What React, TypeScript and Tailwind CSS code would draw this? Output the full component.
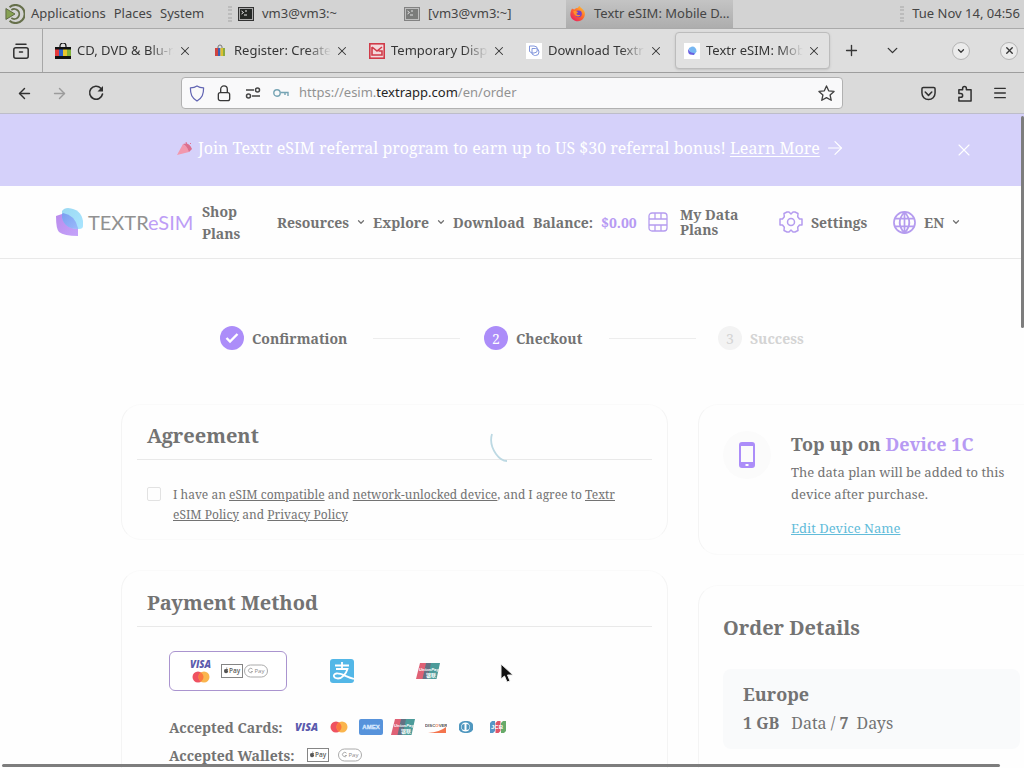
import type { ReactNode } from "react";
import { ArrowLeft, ArrowRight, ChevronDown, Menu, Plus, X } from "lucide-react";

const serif = "font-['Noto_Serif','DejaVu_Serif_Condensed','DejaVu_Serif',serif]";

function TerminalIcon({ faded = false }: { faded?: boolean }) {
  return (
    <svg viewBox="0 0 16 14" className={faded ? "h-3.5 w-4 shrink-0 opacity-50" : "h-3.5 w-4 shrink-0"} aria-hidden="true">
      <rect x="0.5" y="0.5" width="15" height="13" fill="#aaa" stroke="#333" />
      <rect x="2" y="2" width="12" height="10" fill="#252826" />
      <path d="M3.5 4l2 1.5-2 1.5M7 4h2M6 8h3" stroke="#eee" strokeWidth="1" fill="none" />
    </svg>
  );
}

function MateIcon() {
  return (
    <svg viewBox="0 0 22 22" className="h-5 w-5 shrink-0" fill="none" aria-hidden="true">
      <path d="M5 3.500a10 10 0 1 1 0 15" stroke="#66704b" strokeWidth="2.200" />
      <path d="M7 6.500a5.500 5.500 0 1 1 0 9" stroke="#66704b" strokeWidth="2" />
      <path d="M1 5l10 6-10 6z" fill="#86a153" stroke="#59633f" />
    </svg>
  );
}

function FirefoxIcon() {
  return (
    <svg viewBox="0 0 18 20" className="h-[17px] w-4 shrink-0" aria-hidden="true">
      <defs>
        <linearGradient id="fox" x1="1" y1="0" x2="0.2" y2="1">
          <stop offset="0" stopColor="#ffd43a" />
          <stop offset="0.5" stopColor="#ff6b29" />
          <stop offset="1" stopColor="#e91e63" />
        </linearGradient>
      </defs>
      <path d="M2 3c1 1 2 1 3 1 1-1 2-2 4-2 0 0 1-2 2-2 0 2 5 3 6 8 1 5-3 10-8 10S0 14 0 10c0-3 1-5 2-7z" fill="url(#fox)" />
      <circle cx="9.5" cy="9.2" r="4" fill="#7540c8" />
      <path d="M3.5 6c2-1 4 0 5.500 1.500L7 9c1 2 4 2 5 1-1 4-8 3-8.500-4z" fill="#ff8f2b" />
    </svg>
  );
}

function BagIcon({ large = false }: { large?: boolean }) {
  if (large) {
    return (
      <svg viewBox="0 0 16 16" className="h-4 w-4 shrink-0" aria-hidden="true">
        <path d="M5 4V3a3 3 0 0 1 6 0v1" fill="none" stroke="#111" strokeWidth="1.200" />
        <rect x="0" y="4" width="16" height="12" fill="#111" />
        <rect x="0" y="6.500" width="4" height="6.500" fill="#e43b3c" />
        <rect x="4" y="6.500" width="4" height="6.500" fill="#2d62c9" />
        <rect x="8" y="6.500" width="4" height="6.500" fill="#e7c52c" />
        <rect x="12" y="6.500" width="4" height="6.500" fill="#7fb13a" />
      </svg>
    );
  }
  return (
    <svg viewBox="0 0 16 16" className="h-4 w-4 shrink-0" aria-hidden="true">
      <path d="M6 5V4a2 2 0 0 1 4 0v1" fill="none" stroke="#777" />
      <rect x="3" y="5" width="3" height="8" fill="#d0443f" />
      <rect x="6" y="5" width="2.500" height="8" fill="#3a5fb5" />
      <rect x="8.500" y="5" width="2.500" height="8" fill="#dcc033" />
      <rect x="11" y="5" width="2" height="8" fill="#8cab3f" />
    </svg>
  );
}

function MailIcon() {
  return (
    <svg viewBox="0 0 16 16" className="h-4 w-4 shrink-0" fill="none" stroke="#d03a48" strokeWidth="1.600" aria-hidden="true">
      <rect x="0.800" y="0.800" width="14.400" height="14.400" fill="#f3d9dc" />
      <path d="M3 4l5 4 5-4M3 4v8h10V8H9.500" />
    </svg>
  );
}

function TextrIcon() {
  return (
    <svg viewBox="0 0 16 16" className="h-4 w-4 shrink-0 bg-white" fill="none" stroke="#8296dc" aria-hidden="true">
      <path d="M3.500 3H8a3.500 3.500 0 0 1 0 7H6L3.500 8.500zM6 5.500h3.500a3.500 3.500 0 0 1 0 7H8.500L6 11z" />
    </svg>
  );
}

function EsimIcon() {
  return (
    <svg viewBox="0 0 16 16" className="h-4 w-4 shrink-0 bg-white" aria-hidden="true">
      <path d="M5 5l3-1.500c3 0 4.500 2 4.500 5l-2 3-5-1z" fill="#77b7f2" />
      <path d="M4 5.500c1 3 3 4.500 6.500 4.500l-.5 2-4-.5C4.200 11 4 8.500 4 5.500z" fill="#6a5fe0" />
    </svg>
  );
}

function Tab({ icon, title, active = false }: { icon: ReactNode; title: string; active?: boolean }) {
  return (
    <div
      className={
        active
          ? "flex h-[37px] w-[155px] shrink-0 items-center rounded border border-[#bcbcbc] bg-[#e1e1e1] px-2 shadow-sm"
          : "flex h-[37px] w-[157px] shrink-0 items-center pr-3 pl-2"
      }
    >
      {icon}
      <span className="ml-1.5 min-w-0 flex-1 overflow-hidden mask-r-from-75% mask-r-to-100% whitespace-nowrap">{title}</span>
      <button aria-label={"Close " + title} className="ml-1 shrink-0">
        <X size={14} strokeWidth={1.8} />
      </button>
    </div>
  );
}

function SystemBar() {
  return (
    <header className="flex h-[29px] shrink-0 items-center border-b border-[#aaa] bg-[#d3d3d3] text-[13px] whitespace-nowrap text-[#454545]">
      <nav className="flex w-[228px] shrink-0 items-center pl-[5px]">
        <MateIcon />
        <button className="ml-1.5">Applications</button>
        <button className="ml-2">Places</button>
        <button className="ml-2">System</button>
      </nav>
      <span className="h-4 w-1 border-x-2 border-dotted border-[#bcbcbc]" />
      <button className="flex w-[172px] shrink-0 items-center gap-2 pl-1.5">
        <TerminalIcon />vm3@vm3:~
      </button>
      <button className="flex w-[162px] shrink-0 items-center gap-2">
        <TerminalIcon faded />[vm3@vm3:~]
      </button>
      <button className="flex h-full w-[167px] shrink-0 items-center gap-2 bg-linear-to-b from-[#c4c4c4] to-[#adadad] pl-1">
        <FirefoxIcon />Textr eSIM: Mobile D…
      </button>
      <span className="ml-auto h-4 w-1 border-x-2 border-dotted border-[#bcbcbc]" />
      <time className="pr-1 pl-2">Tue Nov 14, 04:56</time>
    </header>
  );
}

function TabBar() {
  return (
    <div className="flex h-11 shrink-0 items-center border-b border-[#9e9e9e] bg-[#dedede] text-[13px] text-[#363636]">
      <button aria-label="Firefox View" className="flex h-full w-[43px] shrink-0 items-center justify-center border-r border-[#a7a7a7] pr-px">
        <svg viewBox="0 0 16 16" className="h-4 w-4" fill="none" stroke="#303030" strokeWidth="1.500" strokeLinecap="round" aria-hidden="true">
          <rect x="0.800" y="4.800" width="14.400" height="10.400" rx="2" />
          <path d="M3 1.200h10M6.500 9h3" />
        </svg>
      </button>
      <div className="flex shrink-0 items-center pl-1">
        <Tab icon={<BagIcon large />} title="CD, DVD & Blu-ray" />
        <Tab icon={<BagIcon />} title="Register: Create a" />
        <Tab icon={<MailIcon />} title="Temporary Disposable" />
        <Tab icon={<TextrIcon />} title="Download Textr f" />
        <Tab active icon={<EsimIcon />} title="Textr eSIM: Mobile" />
      </div>
      <button aria-label="New tab" className="ml-[13px] shrink-0"><Plus size={17} strokeWidth={1.9} /></button>
      <button aria-label="List all tabs" className="ml-6 shrink-0"><ChevronDown size={17} strokeWidth={1.9} /></button>
      <button aria-label="Minimize" className="ml-auto flex h-[18px] w-[18px] items-center justify-center rounded-full border border-[#b4b4b4] bg-[#ebebeb]">
        <ChevronDown size={10} strokeWidth={3} />
      </button>
      <button aria-label="Close window" className="mr-1.5 ml-[30px] flex h-[18px] w-[18px] items-center justify-center rounded-full border border-[#b4b4b4] bg-[#ebebeb]">
        <X size={11} strokeWidth={3} />
      </button>
    </div>
  );
}

function AddressBar() {
  return (
    <div className="flex h-[41px] shrink-0 items-center border-b border-[#bdbdc9] bg-[#dadada] px-4 text-[#303030]">
      <button aria-label="Back"><ArrowLeft size={17} strokeWidth={2} /></button>
      <button aria-label="Forward" className="ml-[18px] text-[#9b9b9b]"><ArrowRight size={17} strokeWidth={2} /></button>
      <button aria-label="Reload" className="ml-5">
        <svg viewBox="0 0 16 16" className="h-4 w-4" fill="none" stroke="currentColor" strokeWidth="1.600" aria-hidden="true">
          <path d="M12.800 3.200A6.500 6.500 0 1 0 14.500 9" strokeLinecap="round" />
          <path d="M15 1v5.500H9.500z" fill="currentColor" stroke="none" />
        </svg>
      </button>
      <div className="ml-[77px] flex h-8 w-[662px] items-center rounded border border-[#b1b1b1] bg-[#f9f9fa] px-[7px]">
        <svg viewBox="0 0 16 18" className="h-[17px] w-4 shrink-0" fill="none" stroke="#6265b3" strokeWidth="1.300" strokeLinejoin="round" aria-hidden="true">
          <path d="M8 1c2 1.500 4.500 2 7 2 0 7-1.500 10.500-7 14C2.500 13.500 1 10 1 3c2.500 0 5-.5 7-2z" />
        </svg>
        <svg viewBox="0 0 14 18" className="ml-3 h-[17px] w-3.5 shrink-0" fill="none" stroke="#383838" strokeWidth="1.400" aria-hidden="true">
          <rect x="1" y="8" width="12" height="8.500" rx="2" />
          <path d="M3.500 8V4.500a3.500 3.500 0 0 1 7 0V8" />
        </svg>
        <svg viewBox="0 0 16 12" className="ml-3.5 h-3 w-4 shrink-0" fill="none" stroke="#444" strokeWidth="1.500" aria-hidden="true">
          <path d="M1 3h8M7 9h8" />
          <circle cx="12.500" cy="3" r="2" />
          <circle cx="3.500" cy="9" r="2" />
        </svg>
        <svg viewBox="0 0 16 12" className="ml-3 h-3 w-4 shrink-0" fill="none" stroke="#76a4b4" strokeWidth="1.400" aria-hidden="true">
          <circle cx="4" cy="6" r="3.200" />
          <path d="M7.500 5.500H15V9M12 5.500V8" />
        </svg>
        <label htmlFor="address" className="sr-only">Address</label>
        <div className="relative ml-2.5 flex-1 text-[13px] whitespace-nowrap text-[#929292]">
          <span aria-hidden="true">https://esim.<span className="text-[#252525]">textrapp.com</span>/en/order</span>
          <input id="address" type="text" defaultValue="https://esim.textrapp.com/en/order" className="absolute inset-0 w-full text-transparent outline-none" />
        </div>
        <button aria-label="Bookmark this page">
          <svg viewBox="0 0 18 18" className="h-[17px] w-[17px]" fill="none" stroke="#414141" strokeWidth="1.400" strokeLinejoin="round" aria-hidden="true">
            <path d="M9 1l2.300 5.200 5.700.6-4.200 3.800 1.200 5.600-5-2.900-5 2.900 1.200-5.600L1 6.800l5.700-.6z" />
          </svg>
        </button>
      </div>
      <button aria-label="Save to Pocket" className="ml-auto">
        <svg viewBox="0 0 16 16" className="h-[15px] w-[15px]" fill="none" stroke="currentColor" strokeWidth="1.600" strokeLinecap="round" strokeLinejoin="round" aria-hidden="true">
          <path d="M1 3q0-1.500 1.500-1.500h11Q15 1.500 15 3v4.500a7 7 0 0 1-14 0zM4.500 6.500L8 10l3.500-3.500" />
        </svg>
      </button>
      <button aria-label="Extensions" className="ml-[21px]">
        <svg viewBox="0 0 16 18" className="h-[17px] w-[15px]" fill="none" stroke="currentColor" strokeWidth="1.600" strokeLinejoin="round" aria-hidden="true">
          <path d="M6 5V3.500a2 2 0 0 1 4 0V5h5v12H2v-4h2a2 2 0 0 0 0-4H2V5z" />
        </svg>
      </button>
      <button aria-label="Menu" className="ml-5"><Menu size={16} strokeWidth={2} /></button>
    </div>
  );
}

function Banner() {
  return (
    <aside className="flex h-[72px] items-center bg-[#d5d1fa] pb-1 text-[16px] text-white">
      <p className="flex flex-1 items-center pl-[177px] whitespace-nowrap">
        <svg viewBox="0 0 16 16" className="mr-[5px] h-4 w-4 shrink-0" aria-hidden="true">
          <path d="M0 15L6 4q5 3 6 8z" fill="#f298ae" />
          <path d="M6 4q6-2 9 5l-3 3Q10 6 6 4z" fill="#dc6f8d" />
          <path d="M9 2l1 3M13 4l1-1" stroke="#df7193" />
        </svg>
        <span>Join Textr eSIM referral program to earn up to US $30 referral bonus! <a href="#referral" className="underline underline-offset-2">Learn More</a></span>
        <ArrowRight size={22} strokeWidth={1.3} className="ml-1" />
      </p>
      <button aria-label="Dismiss" className="mt-1 mr-[50px]"><X size={20} strokeWidth={1.3} /></button>
    </aside>
  );
}

function Logo() {
  return (
    <a href="#home" aria-label="Textr eSIM" className="w-[146px] shrink-0">
      <svg viewBox="0 0 138 32" className="h-8 w-[138px]" aria-hidden="true">
        <defs>
          <linearGradient id="violet" x1="0" y1="0" x2="1" y2="1"><stop stopColor="#ba8bec" /><stop offset="1" stopColor="#c4a3fa" /></linearGradient>
          <linearGradient id="cyan" x1="0" y1="0" x2="1" y2="1"><stop stopColor="#9bd9f2" /><stop offset="1" stopColor="#a9e5ff" /></linearGradient>
          <linearGradient id="blue" x1="0" y1="0" x2="1" y2="1"><stop stopColor="#799ff0" /><stop offset="1" stopColor="#9bb9fa" /></linearGradient>
        </defs>
        <path d="M0 10l6-2 16 14v8q-14 0-19-4Q0 23 0 10z" fill="url(#violet)" />
        <path d="M6 5q2-3 6-3 13 1 15 13v5q0 3-4 3-14 0-17-12z" fill="url(#cyan)" />
        <path d="M6 8l1-1q12 2 15 15v1Q9 23 6 12z" fill="url(#blue)" />
        <text x="32" y="24" fontFamily="Lato, sans-serif" fontSize="20" fontWeight="400" fill="#919191">TEXTR<tspan fill="#bd9df6">eSIM</tspan></text>
      </svg>
    </a>
  );
}

function SiteNav() {
  return (
    <nav className="flex h-[73px] items-center border-b border-[#e9e9e9] pl-14 text-[14px] font-bold whitespace-nowrap text-[#737373]">
      <Logo />
      <a href="#plans" className="w-[75px] shrink-0 pt-px leading-[22px]">Shop<br />Plans</a>
      <button className="flex w-24 shrink-0 items-center font-bold"><span className="w-[79px] text-left">Resources</span><ChevronDown size={10} strokeWidth={3} /></button>
      <button className="flex w-20 shrink-0 items-center font-bold"><span className="w-[63px] text-left">Explore</span><ChevronDown size={10} strokeWidth={3} /></button>
      <a href="#download" className="w-20 shrink-0">Download</a>
      <span className="flex w-[115px] shrink-0"><span className="w-[68px]">Balance:</span><span className="text-[#b79af3]">$0.00</span></span>
      <a href="#data" className="flex w-[131px] shrink-0 items-center gap-3 leading-[15px]">
        <svg viewBox="0 0 20 20" className="h-5 w-5" fill="none" stroke="#b59cef" strokeWidth="1.300" aria-hidden="true">
          <rect x="1" y="1" width="18" height="18" rx="3" />
          <path d="M1 13h18M1 7h6M7 1v6h12M13 1v6M7 13v6M13 13v6" />
        </svg>
        <span>My Data<br />Plans</span>
      </a>
      <a href="#settings" className="flex w-[114px] shrink-0 items-center gap-2">
        <svg viewBox="0 0 24 24" className="h-6 w-6" fill="none" stroke="#b59cef" strokeWidth="1.500" strokeLinejoin="round" aria-hidden="true">
          <path d="M8 2h2l2 2 2-2h2l3 1.500-.3 3.200L20.500 9H23v6h-2.500l-1.800 2.300.3 3.200L16 22h-2l-2-2-2 2H8l-3-1.500.3-3.200L3.500 15H1V9h2.500l1.800-2.300L5 3.500z" />
          <circle cx="12" cy="12" r="3.500" />
        </svg>
        Settings
      </a>
      <button className="flex shrink-0 items-center font-bold">
        <svg viewBox="0 0 24 24" className="mr-2 h-[23px] w-[23px]" fill="none" stroke="#b59cef" strokeWidth="1.800" aria-hidden="true">
          <circle cx="12" cy="12" r="11" />
          <path d="M1.500 8h21M1.500 16h21M12 1v22M12 1q-10 11 0 22M12 1q10 11 0 22" />
        </svg>
        <span className="w-[27px] text-left">EN</span><ChevronDown size={10} strokeWidth={3} />
      </button>
    </nav>
  );
}

function Stepper() {
  return (
    <ol className="flex h-6 items-center pl-[220px] text-[14px] font-bold whitespace-nowrap text-[#737373]">
      <li className="flex w-[153px] shrink-0 items-center gap-2">
        <span className="flex h-6 w-6 items-center justify-center rounded-full bg-[#ac8df9]">
          <svg viewBox="0 0 14 12" className="h-3 w-3.5" fill="none" stroke="white" strokeWidth="2.400" aria-hidden="true"><path d="M1.500 6l3.500 3.500L12.500 2" /></svg>
        </span>
        Confirmation
      </li>
      <li aria-hidden="true" className="h-px w-[87px] shrink-0 bg-[#ededed]" />
      <li className="ml-6 flex w-[125px] shrink-0 items-center gap-2"><span className="flex h-6 w-6 items-center justify-center rounded-full bg-[#ac8df9] font-normal text-white">2</span>Checkout</li>
      <li aria-hidden="true" className="h-px w-[87px] shrink-0 bg-[#ededed]" />
      <li className="ml-[22px] flex items-center gap-2 text-[#d4d4d4]"><span className="flex h-6 w-6 items-center justify-center rounded-full bg-[#f3f3f3] font-normal">3</span>Success</li>
    </ol>
  );
}

function Card({ children, className }: { children: ReactNode; className: string }) {
  return <section className={"rounded-[20px] border border-x-[#f4f4f4] border-y-[#fafafa] bg-[#fefefe] " + className}>{children}</section>;
}

function Visa({ className }: { className: string }) {
  return <svg viewBox="0 0 24 12" className={className} role="img" aria-label="Visa"><text x="0" y="10" textAnchor="start" fontFamily="Open Sans, sans-serif" fontSize="10.500" fontWeight="800" fontStyle="italic" fill="#5b5aad">VISA</text></svg>;
}

function Mastercard({ className }: { className: string }) {
  return (
    <svg viewBox="0 0 18 12" className={className} role="img" aria-label="Mastercard">
      <circle cx="6" cy="6" r="5.500" fill="#ef5261" /><circle cx="12" cy="6" r="5.500" fill="#fab54d" />
      <path d="M9 1.400a5.500 5.500 0 0 1 0 9.200 5.500 5.500 0 0 1 0-9.200z" fill="#fb773f" />
    </svg>
  );
}

function ApplePay() {
  return (
    <svg viewBox="0 0 22 14" className="h-3.5 w-[22px] shrink-0" role="img" aria-label="Apple Pay">
      <rect x="0.500" y="0.500" width="21" height="13" fill="white" stroke="#858585" />
      <path d="M5 4.800q.2-1.300 1.300-1.600 0 1.300-1.300 1.600zM5 5.200q1.200-.7 2 .1-1 1 .2 2.200Q6.500 9.500 5 9.100q-2 .4-2-2.100 0-2.300 2-1.800z" fill="#555" />
      <text x="8" y="9.300" fontFamily="Open Sans, sans-serif" fontSize="6.500" fontWeight="600" fill="#5b5b5b">Pay</text>
    </svg>
  );
}

function GooglePay() {
  return (
    <svg viewBox="0 0 24 14" className="h-3.5 w-6 shrink-0" role="img" aria-label="Google Pay">
      <rect x="0.500" y="1" width="23" height="12" rx="6" fill="white" stroke="#aaa" />
      <path d="M8.500 5.200a2.200 2.200 0 1 0 .2 2.300H6.900" fill="none" stroke="#979797" strokeWidth="0.800" />
      <text x="10.500" y="9.300" fontFamily="Open Sans, sans-serif" fontSize="6" fill="#8a8a8a">Pay</text>
    </svg>
  );
}

function UnionPay() {
  return (
    <svg viewBox="0 0 24 16" className="h-4 w-6 shrink-0" role="img" aria-label="UnionPay">
      <path d="M4 0h8L8.500 16H0z" fill="#df6175" /><path d="M10 0h6l-3.500 16h-6z" fill="#637183" /><path d="M15 0h9l-3.500 16h-9z" fill="#4c9b9a" />
      <text x="3" y="7.500" fontFamily="Liberation Sans, sans-serif" fontSize="4.300" fontWeight="700" fontStyle="italic" fill="white">UnionPay</text>
      <text x="10" y="13.500" fontFamily="Noto Sans CJK SC, sans-serif" fontSize="5" fontWeight="700" fill="white">银联</text>
    </svg>
  );
}

function Alipay() {
  return (
    <svg viewBox="0 0 24 24" className="h-6 w-6" role="img" aria-label="Alipay" fill="none" stroke="white" strokeWidth="1.800">
      <rect width="24" height="24" rx="3" fill="#53b7e7" stroke="none" />
      <path d="M5 6.500h14M12 3v7M6 10h11.500c-1.500 5-5.500 9.500-9.500 9.500-5 0-5.500-4.500-1.500-5 4.500-.5 9 3 17.500 5.500" />
    </svg>
  );
}

function Agreement() {
  return (
    <Card className="h-[136px] px-[15px]">
      <h2 className="border-b border-[#e9e9e9] pt-[17px] pb-[9px] pl-2.5 text-[20px] leading-7 font-bold">Agreement</h2>
      <div className="flex gap-3 pt-[25px] pl-2.5">
        <input id="agree" type="checkbox" className="mt-0.5 h-3.5 w-3.5 shrink-0 appearance-none rounded-xs border border-[#e2e2e2]" />
        <label htmlFor="agree" className="text-[12px] leading-5 whitespace-nowrap">
          I have an <a href="#compatible" className="underline">eSIM compatible</a> and <a href="#unlocked" className="underline">network-unlocked device</a>, and I agree to <a href="#policy" className="underline">Textr<br />eSIM Policy</a> and <a href="#privacy" className="underline">Privacy Policy</a>
        </label>
      </div>
    </Card>
  );
}

function Payment() {
  return (
    <Card className="h-80 px-[15px]">
      <h2 className="border-b border-[#e9e9e9] pt-[18px] pb-[9px] pl-2.5 text-[20px] leading-7 font-bold">Payment Method</h2>
      <div className="flex items-center pt-6 pl-8">
        <button className="flex h-10 w-[118px] items-center rounded-md border border-[#aa94cf] bg-white pl-5">
          <span className="mr-[9px] flex w-[22px] flex-col items-center gap-px"><Visa className="h-[11px] w-[22px]" /><Mastercard className="h-3 w-[18px]" /></span>
          <ApplePay /><span className="ml-px flex"><GooglePay /></span>
        </button>
        <button className="ml-[43px]"><Alipay /></button>
        <button className="ml-[62px]"><UnionPay /></button>
      </div>
      <div className="mt-[26px] flex h-5 items-center pl-8">
        <span className="w-[126px] shrink-0 text-[14px] font-bold whitespace-nowrap">Accepted Cards:</span>
        <Visa className="h-3 w-6" />
        <Mastercard className="ml-[11px] h-3 w-[18px]" />
        <svg viewBox="0 0 24 16" className="ml-[11px] h-4 w-6" role="img" aria-label="American Express"><rect width="24" height="16" rx="2" fill="#5793db" /><text x="12" y="10" textAnchor="middle" fontFamily="Liberation Sans, sans-serif" fontSize="6" fontWeight="700" fill="#d9eaff" stroke="#d9eaff" strokeWidth="0.300">AMEX</text></svg>
        <span className="ml-2 flex"><UnionPay /></span>
        <svg viewBox="0 0 22 14" className="ml-[10px] h-3.5 w-[22px]" role="img" aria-label="Discover"><text x="0" y="6.500" fontFamily="Liberation Sans, sans-serif" fontSize="4.300" fontWeight="700" fill="#555">DISC<tspan fill="#f37a50">O</tspan>VER</text><path d="M3 13q12-1 18-6v6z" fill="#f4744d" /></svg>
        <svg viewBox="0 0 14 12" className="ml-3 h-3 w-3.5" role="img" aria-label="Diners Club"><path d="M5.500 0h3a6 6 0 0 1 0 12h-3a6 6 0 0 1 0-12z" fill="#4f97bf" /><circle cx="6.500" cy="6" r="4.500" fill="white" /><path d="M5.500 3v6a3 3 0 0 1 0-6zM7.500 3v6a3 3 0 0 0 0-6z" fill="#4f97bf" /></svg>
        <svg viewBox="0 0 16 12" className="ml-[17px] h-3 w-4" role="img" aria-label="JCB"><path d="M2 0h3v10l-2 2H0V2z" fill="#5796c6" /><path d="M7.500 0h3v10l-2 2h-3V2z" fill="#df5568" /><path d="M13 0h3v10l-2 2h-3V2z" fill="#67aa69" /><text x="1" y="8" fontFamily="Liberation Sans, sans-serif" fontSize="6" fontWeight="700" fill="white">JCB</text></svg>
      </div>
      <div className="mt-2 flex h-5 items-center pl-8">
        <span className="w-[138px] shrink-0 text-[14px] font-bold whitespace-nowrap">Accepted Wallets:</span>
        <ApplePay /><span className="ml-[9px] flex"><GooglePay /></span>
      </div>
    </Card>
  );
}

function DeviceCard() {
  return (
    <Card className="flex h-[151px] pt-[26px] pl-6">
      <span className="flex h-12 w-12 shrink-0 items-center justify-center rounded-full bg-[#fbfbfb]">
        <svg viewBox="0 0 16 26" className="h-[26px] w-4" aria-hidden="true"><path fillRule="evenodd" d="M3 0h10q3 0 3 3v20q0 3-3 3H3q-3 0-3-3V3q0-3 3-3zM2 4v16h12V4zM6.500 22v2h3v-2z" fill="#ac8df9" /></svg>
      </span>
      <div className="ml-5 whitespace-nowrap">
        <h2 className="text-[18px] leading-[26px] font-bold">Top up on <span className="text-[#b79af3]">Device 1C</span></h2>
        <p className="mt-1 text-[13px] leading-[22px]">The data plan will be added to this<br />device after purchase.</p>
        <a href="#edit" className="mt-3 block text-[13px] leading-[22px] text-[#62bcda] underline">Edit Device Name</a>
      </div>
    </Card>
  );
}

function OrderCard() {
  return (
    <Card className="h-80 px-6 pt-7">
      <h2 className="text-[20px] leading-7 font-bold">Order Details</h2>
      <div className="mt-[27px] h-20 rounded-lg bg-[#f9fafb] px-5 pt-[11px] whitespace-nowrap">
        <h3 className="text-[18px] leading-7 font-bold">Europe</h3>
        <p className="text-[16px] leading-[30px]"><strong>1 GB</strong><span className="ml-3">Data / </span><strong>7</strong><span className="ml-2">Days</span></p>
      </div>
    </Card>
  );
}

export default function App() {
  return (
    <div className="flex h-screen flex-col overflow-hidden bg-[#fefefe] font-['Noto_Sans',sans-serif]">
      <SystemBar />
      <TabBar />
      <AddressBar />
      <div className={"relative min-h-0 flex-1 overflow-hidden text-[#737373] " + serif}>
        <Banner />
        <SiteNav />
        <main className="pt-[67px]">
          <Stepper />
          <div className="flex gap-[30px] pt-[54px] pl-[121px]">
            <div className="flex w-[547px] shrink-0 flex-col gap-[30px]"><Agreement /><Payment /></div>
            <div className="flex w-[347px] shrink-0 flex-col gap-[30px]"><DeviceCard /><OrderCard /></div>
          </div>
        </main>
        <svg viewBox="0 0 20 32" className="absolute top-[317px] left-[489px] h-8 w-5" fill="none" stroke="#bdd9e3" strokeWidth="1.800" aria-hidden="true"><path d="M3 3q-3 10 4 20 5 7 11 7" /></svg>
        <svg viewBox="0 0 14 20" className="absolute top-[549px] left-[500px] h-5 w-3.5" aria-hidden="true"><path d="M1 1v15l3.500-3 2.500 6 3-1-2.500-6H13z" fill="#111" stroke="#eee" /></svg>
        <div className="absolute top-0.5 right-0 h-[212px] w-[3px] rounded bg-[#7d7d7d]" />
        <div className="absolute bottom-px left-0.5 h-[3px] w-[97.5%] rounded bg-[#7d7d7d]" />
      </div>
    </div>
  );
}
